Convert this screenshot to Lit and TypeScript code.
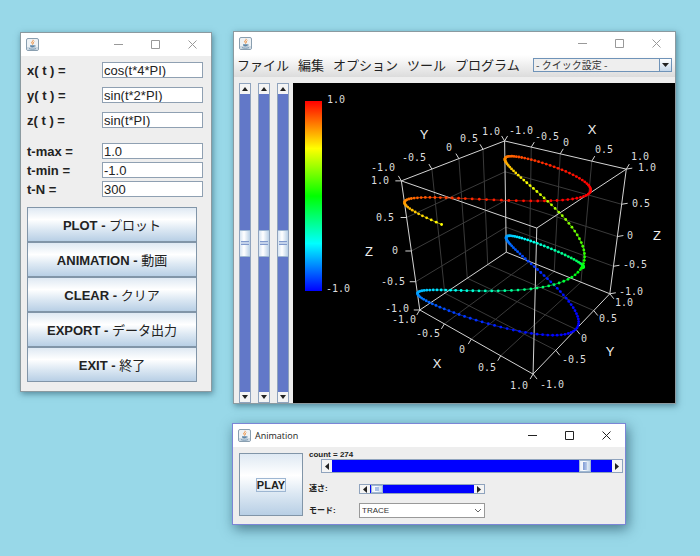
import { LitElement, html, svg, css } from "lit";
import { customElement, property } from "lit/decorators.js";

type Vec3 = [number, number, number];
type Vec2 = [number, number];

/* Cube corners and where the view puts them on the canvas. */
const CORNERS: [Vec3, Vec2][] = [
  [[-1, -1, 1], [401, 181]],
  [[-1, 1, 1], [505, 141]],
  [[1, 1, 1], [626, 169]],
  [[1, -1, 1], [537, 228]],
  [[-1, -1, -1], [420, 310]],
  [[-1, 1, -1], [506, 252]],
  [[1, 1, -1], [610, 294]],
  [[1, -1, -1], [533, 374]],
];
const CX = 515;
const CY = 250;
const SCALE = 100;

/* Least-squares camera matrix through the cube corners. */
function solveCamera(): number[] {
  const n = 11;
  const m = Array.from({ length: n }, () => new Array(n + 1).fill(0));
  for (const [[x, y, z], [px, py]] of CORNERS) {
    const u = (px - CX) / SCALE;
    const v = (py - CY) / SCALE;
    const rows = [
      [x, y, z, 1, 0, 0, 0, 0, -u * x, -u * y, -u * z, u],
      [0, 0, 0, 0, x, y, z, 1, -v * x, -v * y, -v * z, v],
    ];
    for (const r of rows)
      for (let i = 0; i < n; i++) for (let j = 0; j <= n; j++) m[i][j] += r[i] * r[j];
  }
  for (let c = 0; c < n; c++) {
    let p = c;
    for (let r = c + 1; r < n; r++) if (Math.abs(m[r][c]) > Math.abs(m[p][c])) p = r;
    [m[c], m[p]] = [m[p], m[c]];
    for (let r = 0; r < n; r++) {
      if (r === c) continue;
      const f = m[r][c] / m[c][c];
      for (let k = c; k <= n; k++) m[r][k] -= f * m[c][k];
    }
  }
  return m.map((row, i) => row[n] / row[i]);
}

const CAM = solveCamera();

function project([x, y, z]: Vec3): Vec2 {
  const w = CAM[8] * x + CAM[9] * y + CAM[10] * z + 1;
  return [
    CX + (SCALE * (CAM[0] * x + CAM[1] * y + CAM[2] * z + CAM[3])) / w,
    CY + (SCALE * (CAM[4] * x + CAM[5] * y + CAM[6] * z + CAM[7])) / w,
  ];
}

const STEPS = [-1, -0.5, 0, 0.5, 1];
const INNER = [-0.5, 0, 0.5];

const EDGES: [Vec3, Vec3][] = [
  [[-1, -1, 1], [-1, 1, 1]],
  [[-1, 1, 1], [1, 1, 1]],
  [[1, 1, 1], [1, -1, 1]],
  [[1, -1, 1], [-1, -1, 1]],
  [[-1, -1, -1], [-1, 1, -1]],
  [[-1, 1, -1], [1, 1, -1]],
  [[1, 1, -1], [1, -1, -1]],
  [[1, -1, -1], [-1, -1, -1]],
  [[-1, -1, -1], [-1, -1, 1]],
  [[-1, 1, -1], [-1, 1, 1]],
  [[1, 1, -1], [1, 1, 1]],
  [[1, -1, -1], [1, -1, 1]],
];

const GRID: [Vec3, Vec3][] = INNER.flatMap((s): [Vec3, Vec3][] => [
  [[-1, s, -1], [-1, s, 1]],
  [[-1, -1, s], [-1, 1, s]],
  [[s, 1, -1], [s, 1, 1]],
  [[-1, 1, s], [1, 1, s]],
  [[s, -1, -1], [s, 1, -1]],
  [[-1, s, -1], [1, s, -1]],
]);

/* Axis point for each step, with the direction its tick mark takes. */
const TICKS: [(s: number) => Vec3, Vec2][] = [
  [(s) => [-1, s, 1], [-3, -5]],
  [(s) => [s, 1, 1], [3, -5]],
  [(s) => [-1, -1, s], [-6, 0]],
  [(s) => [1, 1, s], [6, -1]],
  [(s) => [s, -1, -1], [-3, 5]],
  [(s) => [1, s, -1], [4, 5]],
];

const LABELS: [string, number, number][] = [
  ["1.0", 327, 103], ["-1.0", 326, 292],
  ["1.0", 482, 135], ["0.5", 460, 142], ["0", 446, 151], ["-0.5", 402, 161], ["-1.0", 371, 171],
  ["1.0", 371, 184], ["0.5", 376, 221], ["0", 392, 254], ["-0.5", 381, 285], ["-1.0", 385, 312],
  ["-1.0", 392, 323], ["-0.5", 416, 337], ["0", 459, 353], ["0.5", 478, 371], ["1.0", 510, 389],
  ["-1.0", 509, 134], ["-0.5", 535, 140], ["0", 563, 146], ["0.5", 595, 153], ["1.0", 631, 160],
  ["1.0", 638, 171], ["0.5", 632, 207], ["0", 627, 239], ["-0.5", 623, 268], ["-1.0", 619, 295],
  ["1.0", 615, 306], ["0.5", 599, 322], ["0", 581, 342], ["-0.5", 562, 363], ["-1.0", 540, 388],
];

const NAMES: [string, number, number][] = [
  ["Y", 424, 139], ["X", 592, 134], ["Z", 369, 256], ["Z", 657, 240], ["X", 437, 368], ["Y", 610, 356],
];

const COUNT = 274;
const TOTAL = 299;
const CURVE = Array.from({ length: COUNT + 1 }, (_, i) => {
  const t = -1 + (2 * i) / TOTAL;
  const z = Math.sin(t * Math.PI);
  const p = project([Math.cos(t * 4 * Math.PI), Math.sin(t * 2 * Math.PI), z]);
  return { p, color: `hsl(${Math.round(120 - 120 * z)} 100% 50%)` };
});

@customElement("java-window")
class JavaWindow extends LitElement {
  @property() name = "";
  @property({ type: Boolean, reflect: true }) active = false;

  static styles = css`
    :host {
      display: block;
      border: 1px solid #8b9aa0;
      background: #eee;
      box-shadow: 1px 2px 6px rgba(20, 60, 80, 0.5);
    }
    :host([active]) {
      border-color: #7b86d6;
      box-shadow: 2px 4px 12px rgba(20, 60, 80, 0.6);
    }
    .bar {
      display: flex;
      align-items: center;
      height: 23px;
      padding-left: 5px;
      background: #fff;
    }
    .icon {
      width: 13px;
      height: 13px;
    }
    .name {
      flex: 1;
      padding-left: 4px;
      font: 9px/12px "Open Sans", sans-serif;
    }
    .ctl {
      display: flex;
      align-items: center;
      justify-content: center;
      width: 37px;
      height: 23px;
      padding: 0;
      border: 0;
      background: none;
      color: #999;
    }
    :host([active]) .ctl {
      color: #222;
    }
    .ctl svg {
      width: 9px;
      height: 9px;
      fill: none;
      stroke: currentColor;
    }
  `;

  render() {
    return html`
      <div class="bar">
        <svg class="icon" viewBox="0 0 13 13" aria-hidden="true">
          <rect x="0.5" y="0.5" width="12" height="12" rx="1.5" fill="#eef2f5" stroke="#8a9fb0" />
          <path d="M1 9h11v3H1z" fill="#ccd8e2" />
          <path d="M7 1.800c1 1.200-2 2-1.200 3.200.4.700 1 .9.7 1.700M8.300 3.600C7 4.300 7.300 5 7.500 5.700" fill="none" stroke="#ef8a33" />
          <path d="M4 7.300h4.500c0 1.500-.5 2.200-2.200 2.200S4 8.800 4 7.300z" fill="#5f86a6" />
          <path d="M8.500 7.500c1.300-.2 1.200 1.200-.3 1.300M3 10.600c2 .8 5 .8 7 0" fill="none" stroke="#5f86a6" stroke-width="0.8" />
        </svg>
        <span class="name">${this.name}</span>
        <button class="ctl" aria-label="Minimize"><svg viewBox="0 0 9 9"><path d="M0 4.500h9" /></svg></button>
        <button class="ctl" aria-label="Maximize"><svg viewBox="0 0 9 9"><path d="M.5 .5h8v8h-8z" /></svg></button>
        <button class="ctl" aria-label="Close"><svg viewBox="0 0 9 9"><path d="M.5.5l8 8M8.500.5l-8 8" /></svg></button>
      </div>
      <slot></slot>
    `;
  }
}

@customElement("scroll-slider")
class ScrollSlider extends LitElement {
  @property() label = "";
  @property({ type: Number }) value = 50;
  @property({ reflect: true }) kind = "vertical";

  static styles = css`
    :host {
      display: flex;
      box-sizing: border-box;
      border: 1px solid #8fa3bd;
      background: #fff;
    }
    :host([kind="vertical"]) {
      flex-direction: column;
      width: 12px;
    }
    .step {
      display: flex;
      align-items: center;
      justify-content: center;
      flex: none;
      width: 10px;
      padding: 0;
      border: 0;
      background: #f4f4f4;
    }
    :host([kind="vertical"]) .step {
      height: 10px;
    }
    .step svg {
      width: 5px;
      height: 7px;
      fill: #222;
    }
    :host([kind="vertical"]) .step svg {
      width: 6px;
      height: 4px;
    }
    .track {
      appearance: none;
      flex: 1;
      min-width: 0;
      min-height: 0;
      margin: 0;
      background: #00f;
    }
    :host([kind="vertical"]) .track {
      writing-mode: vertical-lr;
      width: 10px;
      background: #6278c8;
    }
    .track::-webkit-slider-thumb {
      appearance: none;
      box-sizing: border-box;
      width: 12px;
      height: 12px;
      border: 1px solid #9db6d2;
      background:
        linear-gradient(90deg, #7f9bd4, #b9cbea) center / 4px 8px no-repeat,
        linear-gradient(90deg, #e6eef8, #fff 40%, #c3d6ea);
    }
    :host([kind="small"]) .track::-webkit-slider-thumb {
      height: 8px;
      background:
        linear-gradient(#a9bfe6, #a9bfe6) center / 4px 4px no-repeat,
        linear-gradient(90deg, #e6eef8, #fff 40%, #c3d6ea);
    }
    :host([kind="vertical"]) .track::-webkit-slider-thumb {
      width: 10px;
      height: 27px;
      border-width: 1px 0;
      background:
        linear-gradient(#8099cc 1px, #c3d2ea 1px 3px, #8099cc 3px) center / 8px 4px no-repeat,
        linear-gradient(90deg, #d5e3f2, #fff 40%, #b8cfe6);
    }
  `;

  render() {
    const [back, forth, box] =
      this.kind === "vertical"
        ? ["M0 4L3 0l3 4z", "M0 0h6L3 4z", "0 0 6 4"]
        : ["M4 0v7L0 3.500z", "M0 0v7l4-3.500z", "0 0 5 7"];
    return html`
      <button class="step" aria-label="Back"><svg viewBox=${box}><path d=${back} /></svg></button>
      <input class="track" type="range" aria-label=${this.label} min="0" max="300" .value=${String(this.value)} />
      <button class="step" aria-label="Forward"><svg viewBox=${box}><path d=${forth} /></svg></button>
    `;
  }
}

@customElement("curve-plot")
class CurvePlot extends LitElement {
  static styles = css`
    :host {
      display: block;
      background: #000;
    }
    .plot {
      display: block;
      width: 100%;
      height: auto;
    }
    .grid {
      stroke: #3a3a3a;
    }
    .edge {
      stroke: #d4d4d4;
    }
    .trace {
      opacity: 0.65;
    }
    .num {
      font: 10px "DejaVu Sans Mono", monospace;
      fill: #ddd;
    }
    .axis {
      font: 13px "Liberation Sans", sans-serif;
      fill: #eee;
      text-anchor: middle;
    }
  `;

  line(a: Vec2, b: Vec2, cls: string, color?: string) {
    return svg`<line class=${cls} x1=${a[0]} y1=${a[1]} x2=${b[0]} y2=${b[1]} stroke=${color ?? "none"} />`;
  }

  render() {
    return html`
      <svg class="plot" viewBox="293 83 382 320" role="img" aria-label="3D plot">
        <defs>
          <linearGradient id="hue" x1="0" y1="0" x2="0" y2="1">
            <stop offset="0" stop-color="#f00" />
            <stop offset="0.25" stop-color="#ff0" />
            <stop offset="0.5" stop-color="#0f0" />
            <stop offset="0.75" stop-color="#0ff" />
            <stop offset="1" stop-color="#00f" />
          </linearGradient>
        </defs>
        <rect x="305" y="101" width="17" height="190" fill="url(#hue)" />
        ${GRID.map(([a, b]) => this.line(project(a), project(b), "grid"))}
        ${EDGES.map(([a, b]) => this.line(project(a), project(b), "edge"))}
        ${TICKS.flatMap(([at, [dx, dy]]) =>
          STEPS.map((s) => {
            const p = project(at(s));
            return this.line(p, [p[0] + dx, p[1] + dy], "edge");
          })
        )}
        ${CURVE.slice(1).map((c, i) => this.line(CURVE[i].p, c.p, "trace", c.color))}
        ${CURVE.map((c) => svg`<circle cx=${c.p[0]} cy=${c.p[1]} r="1.4" fill=${c.color} />`)}
        ${LABELS.map(([s, x, y]) => svg`<text class="num" x=${x} y=${y}>${s}</text>`)}
        ${NAMES.map(([s, x, y]) => svg`<text class="axis" x=${x} y=${y}>${s}</text>`)}
      </svg>
    `;
  }
}

const FORMULAS = [
  ["x( t ) =", "cos(t*4*PI)"],
  ["y( t ) =", "sin(t*2*PI)"],
  ["z( t ) =", "sin(t*PI)"],
];
const RANGES = [
  ["t-max =", "1.0"],
  ["t-min =", "-1.0"],
  ["t-N =", "300"],
];
const ACTIONS = [
  ["PLOT", "プロット"],
  ["ANIMATION", "動画"],
  ["CLEAR", "クリア"],
  ["EXPORT", "データ出力"],
  ["EXIT", "終了"],
];
const MENUS = ["ファイル", "編集", "オプション", "ツール", "プログラム"];

@customElement("app-root")
class AppRoot extends LitElement {
  static styles = css`
    :host {
      display: block;
      position: relative;
      min-height: 100vh;
      overflow: hidden;
      background: #98d8e8;
      font-family: "Liberation Sans", "Noto Sans CJK JP", sans-serif;
      color: #222;
    }
    .win {
      position: absolute;
    }
    .control {
      left: 20px;
      top: 32px;
      width: 190px;
    }
    .graph {
      left: 233px;
      right: 24px;
      top: 31px;
    }
    .anim {
      left: 232px;
      right: 74px;
      top: 423px;
    }

    .form {
      padding: 6px 8px 0 6px;
    }
    .field {
      display: flex;
      align-items: center;
      height: 16px;
      margin-bottom: 9px;
      font-weight: bold;
      font-size: 13px;
    }
    .tight .field {
      margin-bottom: 3px;
    }
    .tight {
      padding-top: 6px;
    }
    .cap {
      width: 75px;
    }
    .box {
      box-sizing: border-box;
      flex: 1;
      min-width: 0;
      height: 16px;
      padding: 0 1px;
      border: 1px solid #8fa0b2;
      border-radius: 0;
      background: #fff;
      font: 13px/14px "Liberation Sans", sans-serif;
      color: #222;
    }
    .actions {
      display: grid;
      padding: 7px 14px 9px 6px;
    }
    .steel {
      border: 1px solid #8195a8;
      border-radius: 0;
      background: linear-gradient(#dfe9f3, #fff 35%, #dce8f3 65%, #b8cfe5);
      font: bold 13px "Liberation Sans", sans-serif;
      color: #222;
    }
    .action {
      height: 35px;
      padding: 0;
    }
    .ja {
      font: 400 13px/16px "Noto Sans CJK JP", sans-serif;
    }

    .menubar {
      display: flex;
      gap: 9px;
      height: 22px;
      padding: 0 3px;
      background: linear-gradient(#fff, #dcdcdc);
    }
    .menu {
      height: 20px;
      padding: 0;
      border: 0;
      background: none;
      font: 13px/20px "Noto Sans CJK JP", sans-serif;
      color: #222;
      white-space: nowrap;
    }
    .combo {
      box-sizing: border-box;
      display: flex;
      height: 14px;
      border: 1px solid #6f93b8;
      background: #eee;
    }
    .quick {
      width: 139px;
      margin: 3px 0 0 auto;
    }
    .pick {
      appearance: none;
      flex: 1;
      min-width: 0;
      padding: 0 2px;
      border: 0;
      border-radius: 0;
      background: none;
      font: 10px/12px "Noto Sans CJK JP", sans-serif;
      color: #333;
    }
    .drop {
      width: 11px;
      height: 12px;
      border-left: 1px solid #6f93b8;
      background: linear-gradient(#fff, #c5d8eb);
      pointer-events: none;
    }
    .work {
      display: flex;
      padding: 6px 0 0 5px;
    }
    .bars {
      display: flex;
      gap: 7px;
      padding-right: 4px;
    }
    .canvas {
      flex: 1;
    }

    .player {
      display: flex;
      gap: 6px;
      padding: 6px 2px 6px 6px;
    }
    .play {
      flex: none;
      width: 64px;
      height: 63px;
      padding: 0;
      font-size: 11px;
    }
    .focus {
      outline: 1px solid #9db6d2;
    }
    .panel {
      flex: 1;
      display: flex;
      flex-direction: column;
      font: bold 8px/6px "Liberation Sans", "Noto Sans CJK JP", sans-serif;
    }
    .count {
      height: 6px;
      line-height: 4px;
    }
    .frames {
      height: 14px;
      margin-left: 12px;
    }
    .row {
      display: grid;
      grid-template-columns: 50px 126px;
      align-items: center;
    }
    .speed-row {
      box-sizing: border-box;
      height: 30px;
      padding-top: 2px;
    }
    .mode-row {
      height: 15px;
    }
    .speed {
      height: 10px;
    }
    .mode {
      height: 15px;
      border-color: #999;
      background: #fff;
    }
    .mode .pick {
      font: 8px/13px "Liberation Sans", sans-serif;
    }
    .chev {
      width: 8px;
      height: 13px;
      margin-right: 2px;
      pointer-events: none;
    }
  `;

  field([label, value]: string[], id: string) {
    return html`<div class="field">
      <label class="cap" for=${id}>${label}</label>
      <input class="box" id=${id} type="text" .value=${value} />
    </div>`;
  }

  render() {
    return html`
      <java-window class="win control">
        <div class="form">
          ${FORMULAS.map((f, i) => this.field(f, `formula${i}`))}
          <div class="tight">${RANGES.map((f, i) => this.field(f, `range${i}`))}</div>
        </div>
        <div class="actions">
          ${ACTIONS.map(
            ([en, ja]) => html`<button class="steel action">${en} - <span class="ja">${ja}</span></button>`
          )}
        </div>
      </java-window>

      <java-window class="win graph">
        <div class="menubar">
          ${MENUS.map((m) => html`<button class="menu">${m}</button>`)}
          <div class="combo quick">
            <select class="pick" aria-label="クイック設定">
              <option>- クイック設定 -</option>
            </select>
            <svg class="drop" viewBox="0 0 11 12"><path d="M2 4h7L5.500 8z" fill="#222" /></svg>
          </div>
        </div>
        <div class="work">
          <div class="bars">
            ${["X", "Y", "Z"].map((a) => html`<scroll-slider label=${a} .value=${150}></scroll-slider>`)}
          </div>
          <curve-plot class="canvas"></curve-plot>
        </div>
      </java-window>

      <java-window class="win anim" name="Animation" active>
        <div class="player">
          <button class="steel play"><span class="focus">PLAY</span></button>
          <div class="panel">
            <span class="count">count = ${COUNT}</span>
            <scroll-slider class="frames" kind="wide" label="count" .value=${277}></scroll-slider>
            <div class="row speed-row">
              <span>速さ:</span>
              <scroll-slider class="speed" kind="small" label="速さ" .value=${3}></scroll-slider>
            </div>
            <div class="row mode-row">
              <label for="mode">モード:</label>
              <div class="combo mode">
                <select class="pick" id="mode">
                  <option>TRACE</option>
                </select>
                <svg class="chev" viewBox="0 0 8 13"><path d="M1 5l3 3 3-3" fill="none" stroke="#666" /></svg>
              </div>
            </div>
          </div>
        </div>
      </java-window>
    `;
  }
}
